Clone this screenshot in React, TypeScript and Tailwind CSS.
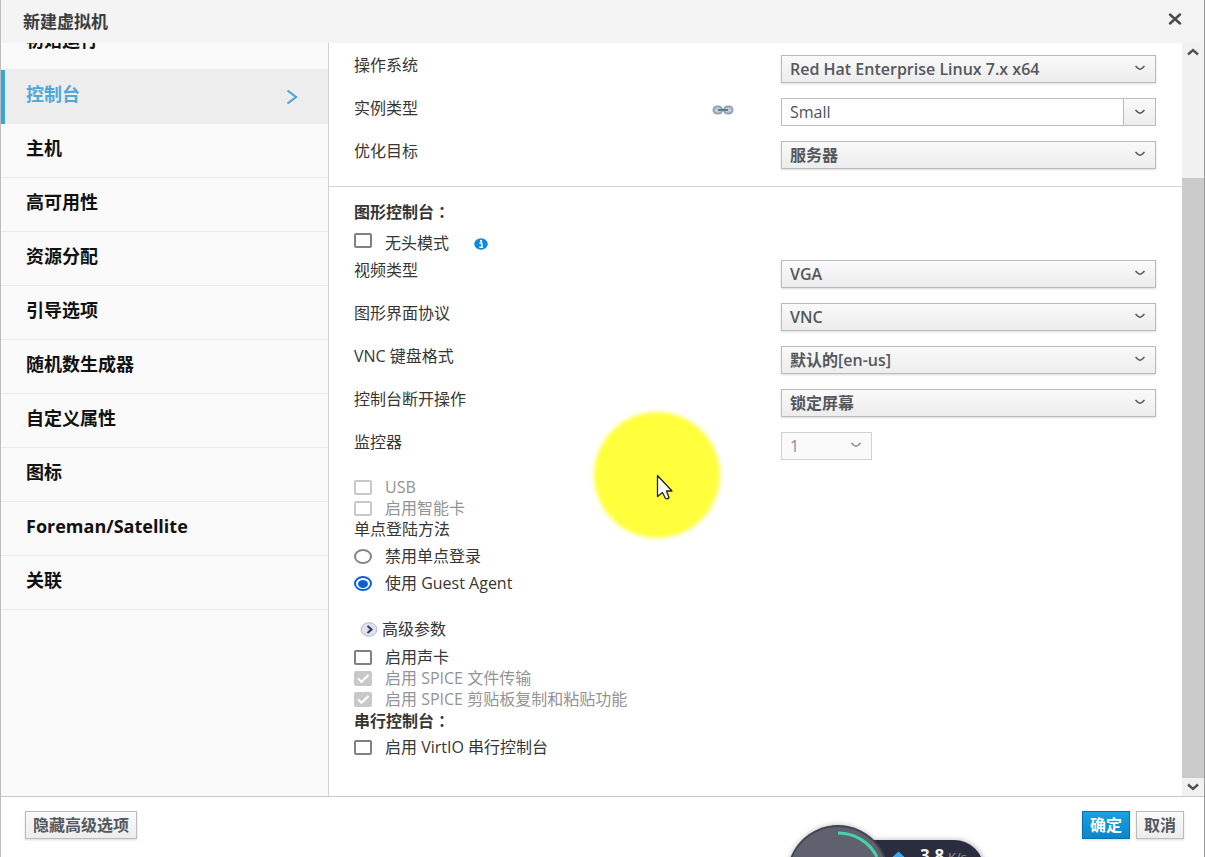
import { useState } from "react";
import type { ReactNode } from "react";

const NAV_ITEMS = [
  "初始运行",
  "控制台",
  "主机",
  "高可用性",
  "资源分配",
  "引导选项",
  "随机数生成器",
  "自定义属性",
  "图标",
  "Foreman/Satellite",
  "关联",
];

function Chevron({ className }: { className: string }) {
  return (
    <svg viewBox="0 0 12 8" className={className} fill="none" stroke="currentColor" strokeWidth="1.5">
      <path d="M1.5 2 Q4 4.800 6 5.200 Q8 4.800 10.500 2" />
    </svg>
  );
}

function Row({ id, label, icon, children }: { id: string; label: string; icon?: ReactNode; children: ReactNode }) {
  return (
    <div className="flex h-7 mb-[15px]">
      <label htmlFor={id} className="flex-1 h-[21px] leading-[21px]">
        {label}
      </label>
      {icon}
      <div className="w-[375px]">{children}</div>
    </div>
  );
}

function Select({ id, options, disabled }: { id: string; options: string[]; disabled?: boolean }) {
  return (
    <div className={disabled ? "relative w-[91px] text-[#8b8d8f]" : "relative w-full text-[#53585e]"}>
      <select
        id={id}
        disabled={disabled}
        className={
          disabled
            ? "appearance-none w-full h-7 border border-[#d1d1d1] bg-[#fafafa] pl-2 pr-8 leading-5"
            : "appearance-none w-full h-7 border border-[#bbb] bg-linear-to-b from-[#fafafa] to-[#ededed] pl-2 pr-8 leading-5 font-semibold shadow-[0_1px_2px_rgba(0,0,0,0.15)]"
        }
      >
        {options.map((o) => (
          <option key={o}>{o}</option>
        ))}
      </select>
      <Chevron className="absolute right-[10px] top-[9px] w-3 h-2 pointer-events-none" />
    </div>
  );
}

function Check({ id, label, checked, disabled, className }: { id: string; label: string; checked?: boolean; disabled?: boolean; className?: string }) {
  const [on, setOn] = useState(!!checked);
  return (
    <div className={"flex items-center h-[21px] gap-[13px] " + (className ?? "")}>
      <div className="grid">
        <input
          id={id}
          type="checkbox"
          checked={on}
          disabled={disabled}
          onChange={(e) => setOn(e.target.checked)}
          className="col-start-1 row-start-1 appearance-none w-[18px] h-[15px] rounded-xs border-2 border-[#808085] bg-white disabled:border-[#c8c8cb] checked:bg-[#c8c8cb] checked:border-[#c8c8cb]"
        />
        {on && (
          <svg viewBox="0 0 18 15" className="col-start-1 row-start-1 w-[18px] h-[15px] pointer-events-none" fill="none" stroke="#fff" strokeWidth="2.200">
            <path d="M4 7.500 L7.500 10.800 L14.500 4" />
          </svg>
        )}
      </div>
      <label htmlFor={id} className={disabled ? "text-[#939396]" : ""}>
        {label}
      </label>
    </div>
  );
}

function Radio({ id, label, checked, onChange }: { id: string; label: string; checked: boolean; onChange: () => void }) {
  return (
    <div className="flex items-center h-[21px] gap-[13px] mt-1.5">
      <div className="grid place-items-center">
        <input
          id={id}
          type="radio"
          name="sso"
          checked={checked}
          onChange={onChange}
          className="col-start-1 row-start-1 appearance-none w-[18px] h-[15px] rounded-[50%] border-2 border-[#85858a] bg-white checked:border-[#0b5fd6]"
        />
        {checked && <span className="col-start-1 row-start-1 w-2.5 h-2 rounded-[50%] bg-[#0b5fd6] pointer-events-none" />}
      </div>
      <label htmlFor={id}>{label}</label>
    </div>
  );
}

function GroupTitle({ text, className }: { text: string; className?: string }) {
  return (
    <h2 className={"h-[21px] font-semibold " + (className ?? "")}>
      {text}
      <span className="font-['Noto_Sans_CJK_TC',sans-serif]">：</span>
    </h2>
  );
}

function LinkIcon() {
  return (
    <svg viewBox="0 0 22 10" className="w-[22px] h-2.5 mt-[7px] mr-[47px]" fill="none">
      <rect x="1.500" y="1.500" width="8.500" height="7" rx="3.500" fill="#c3ccd6" stroke="#94a3b3" strokeWidth="2" />
      <rect x="12" y="1.500" width="8.500" height="7" rx="3.500" fill="#c3ccd6" stroke="#94a3b3" strokeWidth="2" />
      <path d="M6 5 H16" stroke="#63778d" strokeWidth="2" />
    </svg>
  );
}

// floating network speed monitor, partly below the window edge
function SpeedWidget() {
  return (
    <svg viewBox="0 0 210 40" className="absolute left-[781px] bottom-0 w-[210px] h-10 pointer-events-none">
      <defs>
        <filter id="glow" x="-20%" y="-20%" width="140%" height="140%">
          <feGaussianBlur stdDeviation="2" />
        </filter>
      </defs>
      <circle cx="56" cy="59" r="52" fill="#9a9aa5" opacity="0.5" filter="url(#glow)" />
      <rect x="70" y="22" width="134" height="70" rx="30" fill="#9a9aa5" opacity="0.5" filter="url(#glow)" />
      <rect x="60" y="23" width="142" height="70" rx="30" fill="#2b2c3d" />
      <circle cx="56" cy="59" r="51" fill="#42444f" />
      <circle cx="56" cy="59" r="49" fill="#5f626e" />
      <path d="M56 16 A43 43 0 0 1 95 40" fill="none" stroke="#45d3ac" strokeWidth="3" />
      <path d="M116.500 35 L123 41 H110 Z" fill="#3aa5f0" stroke="#3aa5f0" strokeWidth="1" />
      <text x="138" y="45" fill="#f4f4f7" fontSize="17" fontWeight="700" fontFamily="Open Sans, sans-serif">
        3.8
      </text>
      <text x="166" y="45" fill="#9c9daa" fontSize="13" fontFamily="Open Sans, sans-serif">
        K/s
      </text>
    </svg>
  );
}

export default function App() {
  const [active, setActive] = useState("控制台");
  const [sso, setSso] = useState("agent");

  return (
    <div className="relative h-screen flex flex-col overflow-hidden bg-white border-l border-r border-l-[#bdbdbd] border-r-[#9a9a9a] text-base text-[#363636] font-['Open_Sans','Noto_Sans_CJK_SC',sans-serif]">
      <header className="flex items-center justify-between h-[43px] shrink-0 bg-[#f4f4f4] pl-[22px] pr-[22px]">
        <h1 className="text-[17px] font-semibold text-[#3d3d3d]">新建虚拟机</h1>
        <button type="button" aria-label="关闭" className="mb-1.5">
          <svg viewBox="0 0 14 12" className="w-3.5 h-3" stroke="#4a4a4a" strokeWidth="2.400" strokeLinecap="round">
            <path d="M2 1.500 L12 10.500 M12 1.500 L2 10.500" />
          </svg>
        </button>
      </header>

      <div className="flex flex-1 min-h-0">
        <nav className="w-[328px] shrink-0 overflow-hidden bg-[#fafafa] border-r border-[#d1d1d1]">
          <ul className="-mt-[27px]">
            {NAV_ITEMS.map((item) => (
              <li key={item}>
                <button
                  type="button"
                  onClick={() => setActive(item)}
                  className={
                    item === active
                      ? "flex items-center justify-between w-full h-[54px] pb-1.5 pl-[21px] pr-[30px] border-l-4 border-[#39a5dc] bg-[#ededed] text-lg font-semibold text-[#4fa8da]"
                      : "flex items-center w-full h-[54px] pb-1.5 pl-[25px] border-b border-[#ebebeb] text-lg font-bold text-[#111]"
                  }
                >
                  {item}
                  {item === active && (
                    <svg viewBox="0 0 12 16" className="w-3 h-4 mt-1.5" fill="none" stroke="#4da3d2" strokeWidth="2.200">
                      <path d="M1.500 1.500 L10 8 L1.500 14.500" />
                    </svg>
                  )}
                </button>
              </li>
            ))}
          </ul>
        </nav>

        <main className="flex-1 min-w-0 overflow-hidden">
          <section className="pt-3 pb-0.5 pl-[25px] pr-[26px] border-b border-[#d6d6d6]">
            <Row id="os" label="操作系统">
              <Select id="os" options={["Red Hat Enterprise Linux 7.x x64"]} />
            </Row>
            <Row id="instance" label="实例类型" icon={<LinkIcon />}>
              <div className="flex h-7 border border-[#bbb] text-[#4d5258]">
                <input id="instance" defaultValue="Small" className="flex-1 min-w-0 pl-2 bg-white outline-none" />
                <button type="button" aria-label="展开" className="w-8 flex items-center justify-center border-l border-[#bbb] bg-linear-to-b from-[#fafafa] to-[#ededed]">
                  <Chevron className="w-3 h-2" />
                </button>
              </div>
            </Row>
            <Row id="optimize" label="优化目标">
              <Select id="optimize" options={["服务器"]} />
            </Row>
          </section>

          <section className="pt-3.5 pl-[25px] pr-[26px] leading-[21px]">
            <GroupTitle text="图形控制台" className="mb-[11px]" />
            <div className="flex items-center gap-[25px] mb-1.5">
              <Check id="headless" label="无头模式" className="items-start!" />
              <svg viewBox="0 0 14 12" className="w-3.5 h-3">
                <ellipse cx="7" cy="6" rx="6.800" ry="5.800" fill="#0e8bd6" />
                <circle cx="7" cy="3" r="1.200" fill="#fff" />
                <path d="M5.500 5.200 H7.800 V9 M5.300 9.200 H9" stroke="#fff" strokeWidth="1.500" fill="none" />
              </svg>
            </div>
            <Row id="video" label="视频类型">
              <Select id="video" options={["VGA"]} />
            </Row>
            <Row id="protocol" label="图形界面协议">
              <Select id="protocol" options={["VNC"]} />
            </Row>
            <Row id="keyboard" label="VNC 键盘格式">
              <Select id="keyboard" options={["默认的[en-us]"]} />
            </Row>
            <Row id="disconnect" label="控制台断开操作">
              <Select id="disconnect" options={["锁定屏幕"]} />
            </Row>
            <Row id="monitors" label="监控器">
              <Select id="monitors" options={["1"]} disabled />
            </Row>

            <Check id="usb" label="USB" disabled className="mt-[17px]" />
            <Check id="smartcard" label="启用智能卡" disabled />
            <div className="h-[21px]">单点登陆方法</div>
            <Radio id="sso-none" label="禁用单点登录" checked={sso === "none"} onChange={() => setSso("none")} />
            <Radio id="sso-agent" label="使用 Guest Agent" checked={sso === "agent"} onChange={() => setSso("agent")} />

            <button type="button" className="flex items-center gap-1 h-[21px] mt-[25px] ml-1.5">
              <svg viewBox="0 0 18 15" className="w-[18px] h-[15px]" fill="none">
                <ellipse cx="9" cy="7.500" rx="8" ry="6.800" fill="#dfe2ee" stroke="#b6bbcb" />
                <path d="M7.500 4 L11.500 7.500 L7.500 11" stroke="#2f3a58" strokeWidth="2" />
              </svg>
              高级参数
            </button>
            <Check id="sound" label="启用声卡" className="mt-[7px]" />
            <Check id="spice-file" label="启用 SPICE 文件传输" checked disabled />
            <Check id="spice-copy" label="启用 SPICE 剪贴板复制和粘贴功能" checked disabled />
            <GroupTitle text="串行控制台" />
            <Check id="virtio" label="启用 VirtIO 串行控制台" className="mt-1.5" />
          </section>
        </main>

        {/* scrollbar */}
        <div className="flex flex-col items-center w-[22px] shrink-0 bg-[#f1f1f1] text-[#505050]">
          <svg viewBox="0 0 14 8" className="w-3.5 h-2 mt-[5px]" fill="none" stroke="currentColor" strokeWidth="2.400">
            <path d="M2 6.500 L7 2 L12 6.500" />
          </svg>
          <div className="flex-[122]" />
          <div className="flex-[600] w-full bg-[#cbcbcb]" />
          <svg viewBox="0 0 14 8" className="w-3.5 h-2 my-[5px]" fill="none" stroke="currentColor" strokeWidth="2.400">
            <path d="M2 1.500 L7 6 L12 1.500" />
          </svg>
        </div>
      </div>

      <footer className="flex items-start justify-between h-[61px] shrink-0 pt-3.5 pl-6 pr-5 border-t border-[#c9c9c9] bg-white">
        <button type="button" className="h-7 px-[7px] border border-[#bbb] bg-linear-to-b from-[#fafafa] to-[#ededed] font-semibold text-[#53585e] shadow-[0_1px_2px_rgba(0,0,0,0.15)]">
          隐藏高级选项
        </button>
        <div className="flex gap-1.5">
          <button type="button" className="h-7 px-[7px] border border-[#0a6fae] bg-linear-to-b from-[#1ba0e2] to-[#0b86cc] font-semibold text-white shadow-[0_1px_2px_rgba(0,0,0,0.15)]">
            确定
          </button>
          <button type="button" className="h-7 px-[7px] border border-[#bbb] bg-linear-to-b from-[#fafafa] to-[#ededed] font-semibold text-[#53585e] shadow-[0_1px_2px_rgba(0,0,0,0.15)]">
            取消
          </button>
        </div>
      </footer>

      {/* pointer highlight */}
      <div className="absolute left-[593px] top-[412px] w-[126px] h-[126px] rounded-full bg-[#ffff3c] blur-[2px] pointer-events-none" />
      <svg viewBox="0 0 18 26" className="absolute left-[655px] top-[474px] w-[18px] h-[26px] pointer-events-none">
        <path d="M1.500 1.500 V22.500 L6.500 18.500 L9.500 24.500 Q11.500 25.500 13 23.500 L10.500 17 H16 Z" fill="#fff" stroke="#222" strokeWidth="1.300" strokeLinejoin="round" />
      </svg>

      <SpeedWidget />
    </div>
  );
}
